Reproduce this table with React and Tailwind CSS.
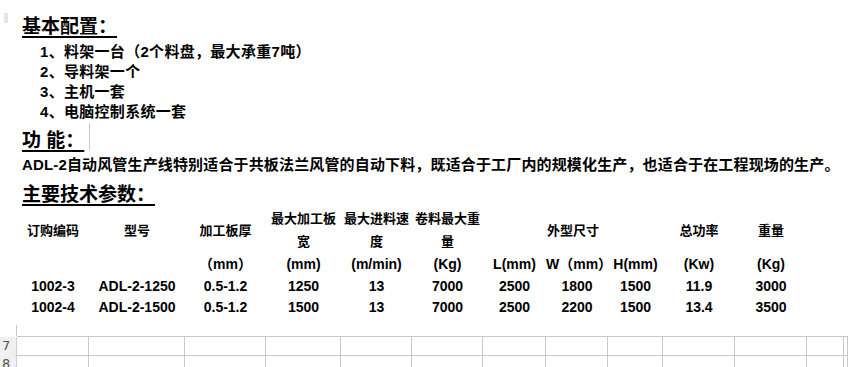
import React from 'react'

const cols =
  'grid grid-cols-[17px_72px_96px_81px_75px_71px_71px_63px_62px_55px_72px_72px_37px_4px]'

const units = ['', '', '', '（mm）', '(mm)', '(m/min)', '(Kg)', 'L(mm)', 'W（mm）', 'H(mm)', '(Kw)', '(Kg)', '', '']

const rows = [
  ['', '1002-3', 'ADL-2-1250', '0.5-1.2', '1250', '13', '7000', '2500', '1800', '1500', '11.9', '3000', '', ''],
  ['', '1002-4', 'ADL-2-1500', '0.5-1.2', '1500', '13', '7000', '2500', '2200', '1500', '13.4', '3500', '', ''],
]

const Title = ({ children, className = '' }) => (
  <div className={`pl-[22px] text-[19px] leading-[24px] font-bold ${className}`}>
    <span className="underline decoration-2 underline-offset-[3px]">{children}</span>
  </div>
)

const SheetRow = ({ label }) => (
  <div className={`${cols} h-[18px]`}>
    <div className="bg-[#f0f0f0] border-r border-b border-[#cfcfcf] text-[13px] leading-[18px] font-normal text-[#555] pl-[2px] font-['DejaVu_Sans',sans-serif]">
      {label}
    </div>
    {Array.from({ length: 13 }).map((_, i) => (
      <div key={i} className="border-r border-b border-[#c8c8c8]" />
    ))}
  </div>
)

export default function App() {
  return (
    <div className="relative w-[848px] h-[367px] overflow-hidden bg-white text-black font-bold font-['Liberation_Sans','Noto_Sans_CJK_SC',sans-serif]">
      {/* stray marks from the sheet behind */}
      <div className="absolute left-[4px] top-[13px] w-[4px] h-[10px] bg-[#e6e6e6]" />
      <div className="absolute left-[89px] top-[123px] w-px h-[27px] bg-[#c8c8c8]" />

      <Title className="pt-[15px]">基本配置：</Title>
      <div className="pl-[40px] pt-[3px] text-[15px] leading-[20px] tracking-[0.3px]">
        <div>1、料架一台（2个料盘，最大承重7吨）</div>
        <div>2、导料架一个</div>
        <div>3、主机一套</div>
        <div>4、电脑控制系统一套</div>
      </div>

      <Title className="pt-[7px]">功 能：</Title>
      <div className="pl-[22px] pt-[2px] text-[15px] leading-[20px] tracking-[0.15px] whitespace-nowrap">
        ADL-2自动风管生产线特别适合于共板法兰风管的自动下料，既适合于工厂内的规模化生产，也适合于在工程现场的生产。
      </div>
      <Title className="pt-[8px]">主要技术参数：</Title>

      <div className="text-center">
        <div className={`${cols} h-[46px] items-center text-[13px] leading-[23px]`}>
          <div />
          <div>订购编码</div>
          <div>型号</div>
          <div>加工板厚</div>
          <div>最大加工板<br />宽</div>
          <div>最大进料速<br />度</div>
          <div>卷料最大重<br />量</div>
          <div className="col-span-3">外型尺寸</div>
          <div>总功率</div>
          <div>重量</div>
          <div />
          <div />
        </div>
        <div className={`${cols} h-[22px] items-center text-[14px] leading-[22px] whitespace-nowrap`}>
          {units.map((u, i) => (
            <div key={i}>{u}</div>
          ))}
        </div>
        {rows.map((r, ri) => (
          <div key={ri} className={`${cols} ${ri === 0 ? 'h-[22px]' : 'h-[21px]'} items-center text-[14px] leading-[21px] whitespace-nowrap`}>
            {r.map((c, i) => (
              <div key={i}>{c}</div>
            ))}
          </div>
        ))}
      </div>

      <div className="h-[18px] flex">
        <div className="w-[17px] mt-[7px] border-r border-[#c8c8c8]" />
      </div>
      <div className="border-t border-[#c8c8c8] ml-[17px]" />
      <SheetRow label="7" />
      <SheetRow label="8" />
    </div>
  )
}
